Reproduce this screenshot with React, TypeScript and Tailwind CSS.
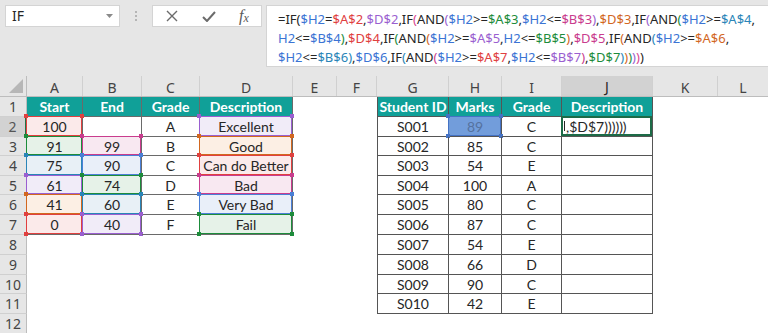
import React from "react";

const K = "#262626";
const BL = "#3b74d4";
const RD = "#e0403f";
const PU = "#9a5fd0";
const GR = "#1d8c3b";
const PK = "#c93c8e";
const OR = "#d2671f";
const TL = "#2a85b8";
const L1 = "#d9468f";
const L2 = PU;
const L3 = GR;
const L4 = OR;
const L5 = TL;
const L6 = PK;

type Tok = [string, string];

const line1: Tok[] = [
  ["=IF(", K], ["$H2", BL], ["=", K], ["$A$2", RD], [",", K], ["$D$2", PU], [",IF", K], ["(", L1], ["AND", K], ["(", L2],
  ["$H2", BL], [">=", K], ["$A$3", GR], [",", K], ["$H2", BL], ["<=", K], ["$B$3", PK], [")", L2], [",", K], ["$D$3", OR],
  [",IF", K], ["(", L2], ["AND", K], ["(", L3], ["$H2", BL], [">=", K], ["$A$4", TL], [",", K],
];
const line2: Tok[] = [
  ["H2", BL], ["<=", K], ["$B$4", BL], [")", L3], [",", K], ["$D$4", RD], [",IF", K], ["(", L3], ["AND", K], ["(", L4],
  ["$H2", BL], [">=", K], ["$A$5", PU], [",", K], ["H2", BL], ["<=", K], ["$B$5", GR], [")", L4], [",", K], ["$D$5", PK],
  [",IF", K], ["(", L4], ["AND", K], ["(", L5], ["$H2", BL], [">=", K], ["$A$6", OR], [",", K],
];
const line3: Tok[] = [
  ["$H2", BL], ["<=", K], ["$B$6", TL], [")", L5], [",", K], ["$D$6", BL], [",IF", K], ["(", L5], ["AND", K], ["(", L6],
  ["$H2", BL], [">=", K], ["$A$7", RD], [",", K], ["$H2", BL], ["<=", K], ["$B$7", PU], [")", L6], [",", K], ["$D$7", GR],
  [")", L5], [")", L4], [")", L3], [")", L2], [")", L1], [")", K],
];

function FLine({ toks }: { toks: Tok[] }) {
  return (
    <div className="h-[19px] leading-[19px] whitespace-nowrap">
      {toks.map((t, i) => (
        <span key={i} style={{ color: t[1] }}>
          {t[0]}
        </span>
      ))}
    </div>
  );
}

const COLS = [
  { k: "A", w: "w-[56px]" },
  { k: "B", w: "w-[59px]" },
  { k: "C", w: "w-[58px]" },
  { k: "D", w: "w-[93px]" },
  { k: "E", w: "w-[44px]" },
  { k: "F", w: "w-[40px]" },
  { k: "G", w: "w-[72px]" },
  { k: "H", w: "w-[53px]" },
  { k: "I", w: "w-[60px]" },
  { k: "J", w: "w-[91px]" },
  { k: "K", w: "w-[65px]" },
  { k: "L", w: "flex-1" },
];

const ROWH = [
  "h-[20px]", "h-[20px]", "h-[19px]", "h-[20px]", "h-[19px]", "h-[20px]",
  "h-[20px]", "h-[20px]", "h-[20px]", "h-[19px]", "h-[20px]", "h-[20px]",
];

const left: (string | number)[][] = [
  ["Start", "End", "Grade", "Description"],
  [100, "", "A", "Excellent"],
  [91, 99, "B", "Good"],
  [75, 90, "C", "Can do Better"],
  [61, 74, "D", "Bad"],
  [41, 60, "E", "Very Bad"],
  [0, 40, "F", "Fail"],
];

const right: string[][] = [
  ["Student ID", "Marks", "Grade", "Description"],
  ["S001", "89", "C", ""],
  ["S002", "85", "C", ""],
  ["S003", "54", "E", ""],
  ["S004", "100", "A", ""],
  ["S005", "80", "C", ""],
  ["S006", "87", "C", ""],
  ["S007", "54", "E", ""],
  ["S008", "66", "D", ""],
  ["S009", "90", "C", ""],
  ["S010", "42", "E", ""],
];

type HL = { b: string; f: string };
const H_RED: HL = { b: RD, f: "#fbeaea" };
const H_GREEN: HL = { b: GR, f: "#e6f2e8" };
const H_TEAL: HL = { b: TL, f: "#e8f0f6" };
const H_PURPLE: HL = { b: PU, f: "#f1ecf8" };
const H_ORANGE: HL = { b: OR, f: "#fcefe4" };
const H_PINK: HL = { b: PK, f: "#f8e8f1" };
const H_BLUE: HL = { b: "#4a7fd6", f: "#e9eff9" };

const HLMAP: Record<string, HL> = {
  A2: H_RED, A3: H_GREEN, A4: H_TEAL, A5: H_PURPLE, A6: H_ORANGE, A7: H_RED,
  B3: H_PINK, B4: H_BLUE, B5: H_GREEN, B6: H_TEAL, B7: H_PURPLE,
  D2: H_PURPLE, D3: H_ORANGE, D4: H_RED, D5: H_PINK, D6: H_BLUE, D7: H_GREEN,
};

function Handles({ c }: { c: string }) {
  return (
    <>
      <div className="absolute left-[-3px] top-[-3px] w-[4px] h-[4px]" style={{ backgroundColor: c }} />
      <div className="absolute right-[-3px] top-[-3px] w-[4px] h-[4px]" style={{ backgroundColor: c }} />
      <div className="absolute left-[-3px] bottom-[-3px] w-[4px] h-[4px]" style={{ backgroundColor: c }} />
      <div className="absolute right-[-3px] bottom-[-3px] w-[4px] h-[4px]" style={{ backgroundColor: c }} />
    </>
  );
}

const cellFont = "font-['Lato',sans-serif] text-[14px] text-[#262626]";

function renderCell(ci: number, r: number, w: string) {
  const col = COLS[ci].k;
  const key = `${col}${r}`;
  if (ci <= 3 && r <= 7) {
    const v = left[r - 1][ci];
    const isHead = r === 1;
    const hl = HLMAP[key];
    return (
      <div
        key={key}
        className={`${w} relative flex items-center justify-center border-r border-b border-[#6a6a6a] ${cellFont} ${
          isHead ? "bg-[#10a098] font-bold text-white" : ""
        }`}
        style={hl ? { backgroundColor: hl.f } : undefined}
      >
        <span className={isHead ? "text-white" : ""}>{v}</span>
        {hl && (
          <div className="absolute left-[-1px] top-[-1px] right-0 bottom-0 border" style={{ borderColor: hl.b }}>
            <Handles c={hl.b} />
          </div>
        )}
      </div>
    );
  }
  if (ci >= 6 && ci <= 9 && r <= 11) {
    const v = right[r - 1][ci - 6];
    const isHead = r === 1;
    const isH2 = key === "H2";
    const isJ2 = key === "J2";
    return (
      <div
        key={key}
        className={`${w} relative flex items-center justify-center border-r border-b border-[#555555] ${
          ci === 6 ? "border-l" : ""
        } ${cellFont} ${isHead ? "bg-[#10a098] font-bold text-white" : ""} ${isH2 ? "bg-[#729ddb]" : ""}`}
      >
        {isJ2 ? (
          <div className="absolute left-[-1px] top-[-1px] right-0 bottom-0 border-2 border-[#1d6b47] flex items-center pl-[1px]">
            <div className="w-[1px] h-[10px] bg-[#262626] mr-[1px]" />
            <span className="whitespace-nowrap text-[#262626]">,$D$7))))))</span>
          </div>
        ) : (
          <span className={isHead ? "text-white" : isH2 ? "text-[#55729f]" : ""}>{v}</span>
        )}
        {isH2 && (
          <div className="absolute left-[-1px] top-[-1px] right-0 bottom-0 border border-[#4472c4]">
            <Handles c="#4472c4" />
          </div>
        )}
      </div>
    );
  }
  return <div key={key} className={`${w}`} />;
}

export default function App() {
  return (
    <div className="w-[768px] h-[333px] overflow-hidden bg-white font-['Noto_Sans',sans-serif]">
      <div className="h-[76px] bg-[#e6e6e6] flex items-start pt-[5px] pl-[5px]">
        <div className="w-[115px] h-[22px] bg-white border border-[#d4d4d4] flex items-center pl-[6px] pr-[6px]">
          <span className="text-[14px] text-[#262626] flex-1 leading-none">IF</span>
          <svg width="7" height="4" viewBox="0 0 7 4">
            <path d="M0 0 L7 0 L3.5 4 Z" fill="#8a8a8a" />
          </svg>
        </div>
        <div className="w-[32px] h-[22px] flex flex-col items-center justify-center gap-[2px]">
          <div className="w-[2px] h-[2px] bg-[#b5b5b5]" />
          <div className="w-[2px] h-[2px] bg-[#b5b5b5]" />
          <div className="w-[2px] h-[2px] bg-[#b5b5b5]" />
        </div>
        <div className="w-[110px] h-[22px] bg-white border border-[#d4d4d4] flex items-center">
          <div className="w-[38px] flex justify-center">
            <svg width="12" height="12" viewBox="0 0 12 12">
              <path d="M1 1 L11 11 M11 1 L1 11" stroke="#6b6b6b" strokeWidth="1.4" />
            </svg>
          </div>
          <div className="w-[36px] flex justify-center">
            <svg width="14" height="11" viewBox="0 0 14 11">
              <path d="M1 6 L5 10 L13 1" stroke="#6b6b6b" strokeWidth="2" fill="none" />
            </svg>
          </div>
          <div className="w-[34px] flex justify-center items-center font-['Liberation_Serif',serif] italic text-[#5a5a5a]">
            <span className="text-[16px] leading-none">f</span>
            <span className="text-[12px] leading-none mt-[4px]">x</span>
          </div>
        </div>
        <div className="ml-[4px] flex-1 h-[62px] bg-white border border-[#d4d4d4] border-r-0 pl-[11px] pt-[4px] text-[13px]">
          <FLine toks={line1} />
          <FLine toks={line2} />
          <FLine toks={line3} />
        </div>
      </div>
      <div className="flex h-[21px] bg-[#e6e6e6] border-b border-[#bdbdbd]">
        <div className="w-[27px] relative border-r border-[#bdbdbd]">
          <svg className="absolute right-[3px] bottom-[3px]" width="14" height="14" viewBox="0 0 14 14">
            <path d="M14 0 L14 14 L0 14 Z" fill="#b7b7b7" />
          </svg>
        </div>
        {COLS.map((c, i) => (
          <div
            key={c.k}
            className={`${c.w} flex items-center justify-center pt-[2px] text-[14px] ${
              c.k === "J" ? "bg-[#d2d2d2] text-[#262626] border-b-2 border-[#217346]" : "text-[#444444]"
            } ${i < COLS.length - 1 ? "border-r border-[#d0d0d0]" : ""}`}
          >
            {c.k}
          </div>
        ))}
      </div>
      {ROWH.map((h, ri) => {
        const r = ri + 1;
        return (
          <div key={r} className={`flex ${h}`}>
            <div
              className={`w-[27px] flex items-center justify-center text-[14px] border-b border-[#d0d0d0] ${
                r === 2
                  ? "bg-[#d2d2d2] text-[#555555] border-r-2 border-r-[#217346]"
                  : "bg-[#e6e6e6] text-[#444444] border-r border-r-[#bdbdbd]"
              }`}
            >
              {r}
            </div>
            {COLS.map((c, ci) => renderCell(ci, r, c.w))}
          </div>
        );
      })}
    </div>
  );
}
